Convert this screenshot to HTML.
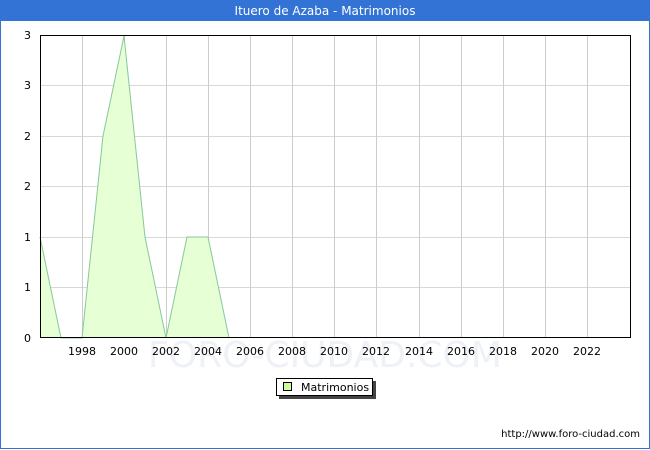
<!DOCTYPE html>
<html><head><style>
body{margin:0;width:650px;height:450px;overflow:hidden;font-family:"DejaVu Sans","Liberation Sans",sans-serif;background:#fff}
.frame{position:absolute;left:0;top:0;width:648px;height:448px;border:1px solid #3373d6;border-top:none}
.title{position:absolute;left:0;top:0;width:650px;height:21px;background:#3373d6;color:#fff;font-size:12px;text-align:center;line-height:22px}
</style></head><body>
<div class="frame"></div>
<div class="title">Ituero de Azaba - Matrimonios</div>
<svg width="650" height="450" style="position:absolute;left:0;top:0" font-family="DejaVu Sans, Liberation Sans, sans-serif" font-size="11">
<text x="325" y="367" text-anchor="middle" font-size="36" fill="#eef1f6">FORO-CIUDAD.COM</text>
<g stroke="#d8d8d8" stroke-width="1">
<line x1="40" y1="85.5" x2="630" y2="85.5"/><line x1="40" y1="136.5" x2="630" y2="136.5"/><line x1="40" y1="186.5" x2="630" y2="186.5"/><line x1="40" y1="237.5" x2="630" y2="237.5"/><line x1="40" y1="287.5" x2="630" y2="287.5"/>
</g>
<g stroke="#cccccc" stroke-width="1">
<line x1="82.5" y1="36" x2="82.5" y2="338"/><line x1="124.5" y1="36" x2="124.5" y2="338"/><line x1="166.5" y1="36" x2="166.5" y2="338"/><line x1="208.5" y1="36" x2="208.5" y2="338"/><line x1="250.5" y1="36" x2="250.5" y2="338"/><line x1="292.5" y1="36" x2="292.5" y2="338"/><line x1="334.5" y1="36" x2="334.5" y2="338"/><line x1="376.5" y1="36" x2="376.5" y2="338"/><line x1="419.5" y1="36" x2="419.5" y2="338"/><line x1="461.5" y1="36" x2="461.5" y2="338"/><line x1="503.5" y1="36" x2="503.5" y2="338"/><line x1="545.5" y1="36" x2="545.5" y2="338"/><line x1="587.5" y1="36" x2="587.5" y2="338"/>
</g>
<polygon points="40,237 61,338 82,338 103,136 124,36 145,237 166,338 187,237 208,237 229,338 40,338" fill="#e6ffd4" stroke="none"/>
<polyline points="40,237 61,338 82,338 103,136 124,36 145,237 166,338 187,237 208,237 229,338" fill="none" stroke="#86c89a" stroke-width="1"/>
<rect x="40.5" y="35.5" width="590" height="302" fill="none" stroke="#000"/>
<g text-anchor="end"><text x="31" y="39">3</text><text x="31" y="89">3</text><text x="31" y="140">2</text><text x="31" y="190">2</text><text x="31" y="241">1</text><text x="31" y="291">1</text><text x="31" y="342">0</text></g>
<g text-anchor="middle"><text x="82" y="355">1998</text><text x="124" y="355">2000</text><text x="166" y="355">2002</text><text x="208" y="355">2004</text><text x="250" y="355">2006</text><text x="292" y="355">2008</text><text x="334" y="355">2010</text><text x="376" y="355">2012</text><text x="419" y="355">2014</text><text x="461" y="355">2016</text><text x="503" y="355">2018</text><text x="545" y="355">2020</text><text x="587" y="355">2022</text></g>
<rect x="279" y="381" width="97" height="18" fill="#444"/>
<rect x="276.5" y="378.5" width="96" height="17" fill="#fff" stroke="#000"/>
<rect x="283.5" y="382.5" width="8" height="8" fill="#ccff99" stroke="#000"/>
<text x="301" y="391">Matrimonios</text>
<text x="640" y="437" text-anchor="end" font-size="10">http://www.foro-ciudad.com</text>
</svg>
</body></html>
